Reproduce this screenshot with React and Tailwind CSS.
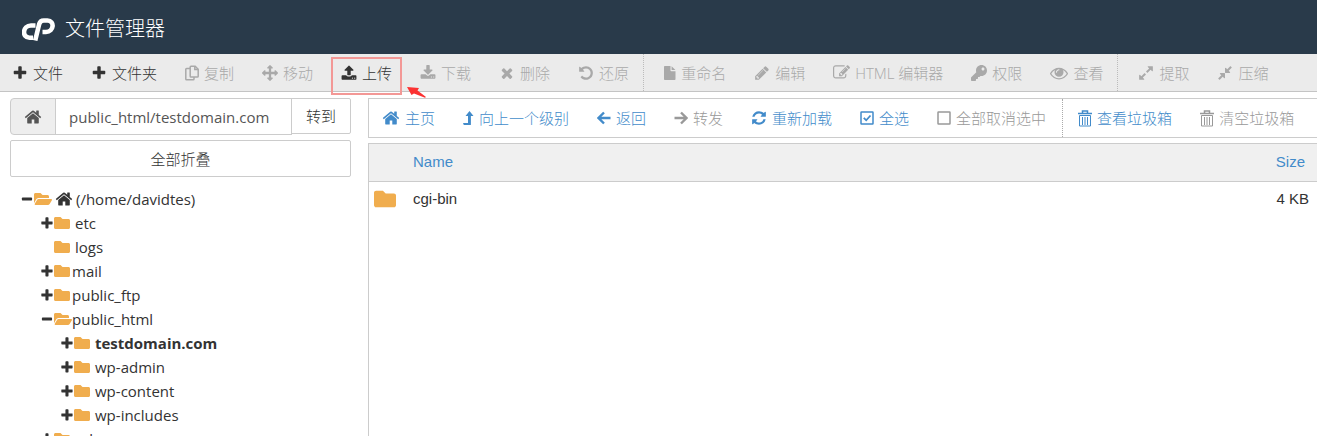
import React from "react";
import { FaFolder, FaFolderOpen, FaKey } from "react-icons/fa";

const paths = {
  plus: "M1600 736v192q0 40-28 68t-68 28h-416v416q0 40-28 68t-68 28h-192q-40 0-68-28t-28-68v-416h-416q-40 0-68-28t-28-68v-192q0-40 28-68t68-28h416v-416q0-40 28-68t68-28h192q40 0 68 28t28 68v416h416q40 0 68 28t28 68z",
  minus:
    "M1600 736v192q0 40-28 68t-68 28h-1216q-40 0-68-28t-28-68v-192q0-40 28-68t68-28h1216q40 0 68 28t28 68z",
  move: "M1792 896q0 26-19 45l-256 256q-19 19-45 19t-45-19-19-45v-128h-384v384h128q26 0 45 19t19 45-19 45l-256 256q-19 19-45 19t-45-19l-256-256q-19-19-19-45t19-45 45-19h128v-384h-384v128q0 26-19 45t-45 19-45-19l-256-256q-19-19-19-45t19-45l256-256q19-19 45-19t45 19 19 45v128h384v-384h-128q-26 0-45-19t-19-45 19-45l256-256q19-19 45-19t45 19l256 256q19 19 19 45t-19 45-45 19h-128v384h384v-128q0-26 19-45t45-19 45 19l256 256q19 19 19 45z",
  upload:
    "M1344 1472q0-26-19-45t-45-19-45 19-19 45 19 45 45 19 45-19 19-45zm256 0q0-26-19-45t-45-19-45 19-19 45 19 45 45 19 45-19 19-45zm128-224v320q0 40-28 68t-68 28h-1472q-40 0-68-28t-28-68v-320q0-40 28-68t68-28h427q21 56 70.5 92t110.5 36h256q61 0 110.5-36t70.5-92h427q40 0 68 28t28 68zm-325-648q-17 40-59 40h-256v448q0 26-19 45t-45 19h-256q-26 0-45-19t-19-45v-448h-256q-42 0-59-40-17-39 14-69l448-448q18-19 45-19t45 19l448 448q31 30 14 69z",
  download:
    "M1344 1344q0-26-19-45t-45-19-45 19-19 45 19 45 45 19 45-19 19-45zm256 0q0-26-19-45t-45-19-45 19-19 45 19 45 45 19 45-19 19-45zm128-224v320q0 40-28 68t-68 28h-1472q-40 0-68-28t-28-68v-320q0-40 28-68t68-28h465l135 136q58 56 136 56t136-56l136-136h464q40 0 68 28t28 68zm-325-569q17 41-14 70l-448 448q-18 19-45 19t-45-19l-448-448q-31-29-14-70 17-39 59-39h256v-448q0-26 19-45t45-19h256q26 0 45 19t19 45v448h256q42 0 59 39z",
  times:
    "M1490 1322q0 40-28 68l-136 136q-28 28-68 28t-68-28l-294-294-294 294q-28 28-68 28t-68-28l-136-136q-28-28-28-68t28-68l294-294-294-294q-28-28-28-68t28-68l136-136q28-28 68-28t68 28l294 294 294-294q28-28 68-28t68 28l136 136q28 28 28 68t-28 68l-294 294 294 294q28 28 28 68z",
  undo: "M1664 896q0 156-61 298t-164 245-245 164-298 61q-172 0-327-72.5t-264-204.5q-7-10-6.5-22.5t8.5-20.5l137-138q10-9 25-9 16 2 23 12 73 95 179 147t225 52q104 0 198.5-40.5t163.5-109.5 109.5-163.5 40.5-198.5-40.5-198.5-109.5-163.5-163.5-109.5-198.5-40.5q-98 0-188 35.5t-160 101.5l137 138q31 30 14 69-17 40-59 40h-448q-26 0-45-19t-19-45v-448q0-42 40-59 39-17 69 14l130 129q107-101 244.5-156.5t284.5-55.5q156 0 298 61t245 164 164 245 61 298z",
  pencil:
    "M491 1536l91-91-235-235-91 91v107h128v128h107zm523-928q0-22-22-22-10 0-17 7l-542 542q-7 7-7 17 0 22 22 22 10 0 17-7l542-542q7-7 7-17zm-54-192l416 416-832 832h-416v-416zm683 96q0 53-37 90l-166 166-416-416 166-165q36-38 90-38 53 0 91 38l235 234q37 39 37 91z",
  edit: "M888 1184l116-116-152-152-116 116v56h96v96h56zm440-720q-16-16-33 1l-350 350q-17 17-1 33t33-1l350-350q17-17 1-33zm80 594v190q0 119-84.5 203.5t-203.5 84.5h-832q-119 0-203.5-84.5t-84.5-203.5v-832q0-119 84.5-203.5t203.5-84.5h832q63 0 117 25 15 7 18 23 3 17-9 29l-49 49q-14 14-32 8-23-6-45-6h-832q-66 0-113 47t-47 113v832q0 66 47 113t113 47h832q66 0 113-47t47-113v-126q0-13 9-22l64-64q15-15 35-7t20 29zm-96-738l288 288-672 672h-288v-288zm444 132l-92 92-288-288 92-92q28-28 68-28t68 28l152 152q28 28 28 68t-28 68z",
  eye: "M1664 960q-152-236-381-353 61 104 61 225 0 185-131.5 316.5t-316.5 131.5-316.5-131.5-131.5-316.5q0-121 61-225-229 117-381 353 133 205 333.5 326.5t434.5 121.5 434.5-121.5 333.5-326.5zm-720-384q0-20-14-34t-34-14q-125 0-214.5 89.5t-89.5 214.5q0 20 14 34t34 14 34-14 14-34q0-86 61-147t147-61q20 0 34-14t14-34zm848 384q0 34-20 69-140 230-376.5 368.5t-499.5 138.5-499.5-139-376.5-368q-20-35-20-69t20-69q140-229 376.5-368t499.5-139 499.5 139 376.5 368q20 35 20 69z",
  expand:
    "M883 1056q0 13-10 23l-332 332 144 144q19 19 19 45t-19 45-45 19h-448q-26 0-45-19t-19-45v-448q0-26 19-45t45-19 45 19l144 144 332-332q10-10 23-10t23 10l114 114q10 10 10 23zm781-864v448q0 26-19 45t-45 19-45-19l-144-144-332 332q-10 10-23 10t-23-10l-114-114q-10-10-10-23t10-23l332-332-144-144q-19-19-19-45t19-45 45-19h448q26 0 45 19t19 45z",
  compress:
    "M896 960v448q0 26-19 45t-45 19-45-19l-144-144-332 332q-10 10-23 10t-23-10l-114-114q-10-10-10-23t10-23l332-332-144-144q-19-19-19-45t19-45 45-19h448q26 0 45 19t19 45zm755-672q0 13-10 23l-332 332 144 144q19 19 19 45t-19 45-45 19h-448q-26 0-45-19t-19-45v-448q0-26 19-45t45-19 45 19l144 144 332-332q10-10 23-10t23 10l114 114q10 10 10 23z",
  home: "M1472 992v480q0 26-19 45t-45 19h-384v-384h-256v384h-384q-26 0-45-19t-19-45v-480q0-1 .5-3t.5-3l575-474 575 474q1 2 1 6zm223-69l-62 74q-8 9-21 11h-3q-13 0-21-7l-692-577-692 577q-12 8-24 7-13-2-21-11l-62-74q-8-10-7-23.5t11-21.5l719-599q32-26 76-26t76 26l244 204v-195q0-14 9-23t23-9h192q14 0 23 9t9 23v408l219 182q10 8 11 21.5t-7 23.5z",
  refresh:
    "M1639 1056q0 5-1 7-64 268-268 434.5t-478 166.5q-146 0-282.5-55t-243.5-157l-129 129q-19 19-45 19t-45-19-19-45v-448q0-26 19-45t45-19h448q26 0 45 19t19 45-19 45l-137 137q71 66 161 102t187 36q134 0 250-65t186-179q11-17 53-117 8-23 30-23h192q13 0 22.5 9.5t9.5 22.5zm25-800v448q0 26-19 45t-45 19h-448q-26 0-45-19t-19-45 19-45l138-138q-148-137-349-137-134 0-250 65t-186 179q-11 17-53 117-8 23-30 23h-199q-13 0-22.5-9.5t-9.5-22.5v-7q65-268 270-434.5t480-166.5q146 0 284 55.5t245 156.5l130-129q19-19 45-19t45 19 19 45z",
};

const Glyph = ({ name, box = "0 0 1792 1792", className = "w-4 h-4" }) => (
  <svg viewBox={box} className={`shrink-0 ${className}`} fill="currentColor" aria-hidden="true">
    <path d={paths[name]} />
  </svg>
);

const Line = ({ box, className, width = 2, children }) => (
  <svg
    viewBox={box}
    className={`shrink-0 ${className}`}
    fill="none"
    stroke="currentColor"
    strokeWidth={width}
    aria-hidden="true"
  >
    {children}
  </svg>
);

const Logo = () => (
  <Line box="0 0 33 23" className="w-[33px] h-[23px]" width={4.6}>
    <path d="M13.500 7.500h-4.500c-8.500 0-9.500 12.200-1.500 12.200h3.500" />
    <path d="M13.200 22.500l4-16.500q1-3.500 4.500-3.500h3.800c7.500 0 6.500 11.500-1.500 11.500h-3.500" />
  </Line>
);

const CopyIcon = () => (
  <Line box="0 0 14 16" className="w-[14px] h-4" width={1.5}>
    <path d="M6 1.200h4.200l3 3v7q0 .8-.8.8h-6.400q-.8 0-.8-.8v-9.200q0-.8.8-.8z" />
    <path d="M9.800 1.200v3.300h3.400M5.200 3.500h-3.600q-.8 0-.8.8v9.700q0 .8.8.8h6.600q.8 0 .8-.8v-2" />
  </Line>
);

const FileIcon = () => (
  <svg viewBox="0 0 12 16" className="w-3 h-4 shrink-0" fill="currentColor" aria-hidden="true">
    <path d="M.8 1h5.700v4.500q0 .7.7.7h4.300v8q0 .8-.8.8h-9.900q-.8 0-.8-.8v-12.400q0-.8.8-.8zM7.600 1.200l3.800 3.900h-3.800z" />
  </svg>
);

const LevelUpIcon = () => (
  <svg viewBox="0 0 11 16" className="w-[11px] h-4 shrink-0" fill="currentColor" aria-hidden="true">
    <path d="M6.500 1l4 5h-2.600v8.500q0 .5-.5.5h-6.200q-.3 0-.5-.3l-.600-1.200q-.1-.5.300-.500h4.600v-7h-2.500z" />
  </svg>
);

const ArrowIcon = ({ right }) => (
  <Line box="0 0 14 16" className="w-[14px] h-4" width={2.4}>
    <path d={right ? "M.5 8h11.500M7 2.500l5.500 5.500-5.500 5.500" : "M13.500 8h-11.500M7 2.500l-5.500 5.500 5.500 5.500"} />
  </Line>
);

const SquareIcon = ({ checked }) => (
  <Line box="0 0 14 16" className="w-[14px] h-4" width={1.5}>
    <rect x="1" y="2" width="12" height="12" rx="0.5" />
    {checked && <path d="M3.800 7.800l2.400 2.500 4.300-4.800" strokeWidth="1.800" />}
  </Line>
);

const TrashIcon = () => (
  <Line box="0 0 14 17" className="w-[14px] h-[17px]" width={1}>
    <path d="M0 3.500h14M4.500 3v-2h5v2" strokeWidth="1.500" />
    <path d="M1.500 5.500h11v10.500h-11zM4.500 7v8M7 7v8M9.500 7v8" />
  </Line>
);

const fileActions = [
  [
    { label: "文件", icon: <Glyph name="plus" />, on: true },
    { label: "文件夹", icon: <Glyph name="plus" />, on: true },
    { label: "复制", icon: <CopyIcon /> },
    { label: "移动", icon: <Glyph name="move" /> },
    { label: "上传", icon: <Glyph name="upload" />, on: true, marked: true },
    { label: "下载", icon: <Glyph name="download" /> },
    { label: "删除", icon: <Glyph name="times" /> },
    { label: "还原", icon: <Glyph name="undo" /> },
  ],
  [
    { label: "重命名", icon: <FileIcon /> },
    { label: "编辑", icon: <Glyph name="pencil" /> },
    { label: "HTML 编辑器", icon: <Glyph name="edit" className="w-[17px] h-[17px]" /> },
    { label: "权限", icon: <FaKey className="w-4 h-4 shrink-0" /> },
    { label: "查看", icon: <Glyph name="eye" className="w-[18px] h-[18px]" /> },
  ],
  [
    { label: "提取", icon: <Glyph name="expand" /> },
    { label: "压缩", icon: <Glyph name="compress" /> },
  ],
];

const viewActions = [
  [
    { label: "主页", icon: <Glyph name="home" className="w-[18px] h-[18px]" />, on: true },
    { label: "向上一个级别", icon: <LevelUpIcon />, on: true },
    { label: "返回", icon: <ArrowIcon />, on: true },
    { label: "转发", icon: <ArrowIcon right /> },
    { label: "重新加载", icon: <Glyph name="refresh" />, on: true },
    { label: "全选", icon: <SquareIcon checked />, on: true },
    { label: "全部取消选中", icon: <SquareIcon /> },
  ],
  [
    { label: "查看垃圾箱", icon: <TrashIcon />, on: true },
    { label: "清空垃圾箱", icon: <TrashIcon /> },
  ],
];

const tree = [
  { name: "etc", state: "closed", gap: true },
  { name: "logs", state: "leaf", gap: true },
  { name: "mail", state: "closed" },
  { name: "public_ftp", state: "closed" },
  {
    name: "public_html",
    state: "open",
    children: [
      { name: "testdomain.com", state: "closed", gap: true, current: true },
      { name: "wp-admin", state: "closed", gap: true },
      { name: "wp-content", state: "closed", gap: true },
      { name: "wp-includes", state: "closed", gap: true },
    ],
  },
  { name: "ssl", state: "closed", gap: true },
];

const Action = ({ item, color }) => (
  <button
    type="button"
    disabled={!item.on}
    className={`relative flex items-center gap-[5px] whitespace-nowrap font-light ${color}`}
  >
    {item.icon}
    {item.label}
    {item.marked && (
      <>
        <span className="absolute -inset-x-[10px] -top-1 -bottom-[10px] border-2 border-[#f39896]" />
        <svg viewBox="0 0 20 14" className="absolute left-[66px] top-[26px] w-5 h-[14px]" fill="#fb3232">
          <path d="M0 0l12 1-1.500 2.500 8.500 6.500-1 .8-11-4.300-2.500 1.500z" />
        </svg>
      </>
    )}
  </button>
);

const ToggleIcon = ({ state }) => (
  <span className="w-3 mr-[1px] flex justify-center">
    {state === "open" && <Glyph name="minus" className="w-3 h-3" box="150 0 1500 1664" />}
    {state === "closed" && <Glyph name="plus" className="w-3 h-3" box="150 90 1500 1500" />}
  </span>
);

const TreeNode = ({ node }) => (
  <li>
    <a href="#" className={`h-6 flex items-center ${node.current ? "font-bold" : ""}`}>
      <ToggleIcon state={node.state} />
      {node.state === "open" ? (
        <FaFolderOpen className="w-[18px] h-4 shrink-0 text-[#f0ad4e]" />
      ) : (
        <FaFolder className="w-4 h-4 shrink-0 mr-[2px] text-[#f0ad4e]" />
      )}
      <span className={node.gap ? "ml-[3px]" : ""}>{node.name}</span>
    </a>
    {node.children && (
      <ul className="pl-5">
        {node.children.map((child) => (
          <TreeNode key={child.name} node={child} />
        ))}
      </ul>
    )}
  </li>
);

const App = () => {
  return (
    <div className="h-screen flex flex-col overflow-hidden bg-white text-[15px] leading-6 text-[#333] font-['Open_Sans','Noto_Sans_CJK_SC',sans-serif]">
      <header className="h-[54px] shrink-0 flex items-center bg-[#293a4a] text-white pl-[22px] gap-[10px] pt-1">
        <Logo />
        <h1 className="text-xl font-light">文件管理器</h1>
      </header>

      <nav className="h-[38px] shrink-0 flex bg-[#ebebeb] border-b border-[#c4c4c4]">
        {fileActions.map((group, i) => (
          <div
            key={i}
            className={`flex items-center gap-7 pr-[14px] ${
              i === 0 ? "pl-3" : "pl-5 border-l border-dotted border-[#bbb]"
            }`}
          >
            {group.map((item) => (
              <Action key={item.label} item={item} color={item.on ? "text-[#333]" : "text-[#a9a9a9]"} />
            ))}
          </div>
        ))}
      </nav>

      <main className="flex-1 min-h-0 flex pt-[6px]">
        <aside className="w-[368px] shrink-0 pl-[10px] pr-[17px] overflow-hidden">
          <form className="flex items-start">
            <button
              type="button"
              aria-label="主页"
              className="w-[46px] h-[37px] flex items-center justify-center bg-[#eee] border border-[#ccc] rounded-l text-[#555]"
            >
              <Glyph name="home" className="w-[18px] h-[18px]" />
            </button>
            <input
              type="text"
              aria-label="路径"
              defaultValue="public_html/testdomain.com"
              className="flex-1 min-w-0 h-[37px] px-[13px] -ml-px border border-[#ccc] text-[#555]"
            />
            <button type="button" className="w-[60px] h-9 -ml-px border border-[#ccc] rounded-r-xs font-light">
              转到
            </button>
          </form>
          <button type="button" className="w-full h-[37px] mt-[5px] border border-[#ccc] rounded-xs font-light">
            全部折叠
          </button>

          <ul className="pl-[11px] mt-[10px]">
            <li>
              <a href="#" className="h-6 flex items-center">
                <ToggleIcon state="open" />
                <FaFolderOpen className="w-[18px] h-4 shrink-0 text-[#f0ad4e]" />
                <Glyph name="home" className="w-[18px] h-[18px] mx-[3px]" />
                <span>(/home/davidtes)</span>
              </a>
              <ul className="pl-5">
                {tree.map((node) => (
                  <TreeNode key={node.name} node={node} />
                ))}
              </ul>
            </li>
          </ul>
        </aside>

        <section className="flex-1 min-w-0 flex flex-col">
          <div className="h-10 shrink-0 flex border border-r-0 border-[#ccc]">
            {viewActions.map((group, i) => (
              <div
                key={i}
                className={`flex items-center gap-7 ${
                  i === 0 ? "pl-[13px] pr-4" : "px-[15px] border-l border-dotted border-[#aaa]"
                }`}
              >
                {group.map((item) => (
                  <Action key={item.label} item={item} color={item.on ? "text-[#428bca]" : "text-[#999]"} />
                ))}
              </div>
            ))}
          </div>

          <div className="flex-1 mt-[5px] border-l border-t border-[#ccc] font-['Liberation_Sans',sans-serif]">
            <table className="w-full border-collapse">
              <thead>
                <tr className="h-[37px] bg-[#f0f0f0] border-b border-[#ccc] text-[#428bca]">
                  <th className="w-11" aria-label="类型" />
                  <th className="text-left font-normal">Name</th>
                  <th className="text-right font-normal pr-3">Size</th>
                </tr>
              </thead>
              <tbody>
                <tr className="h-9">
                  <td className="pl-[5px]">
                    <FaFolder className="w-[22px] h-[22px] text-[#f0ad4e]" />
                  </td>
                  <td>cgi-bin</td>
                  <td className="text-right pr-2">4 KB</td>
                </tr>
              </tbody>
            </table>
          </div>
        </section>
      </main>
    </div>
  );
};

export default App;
